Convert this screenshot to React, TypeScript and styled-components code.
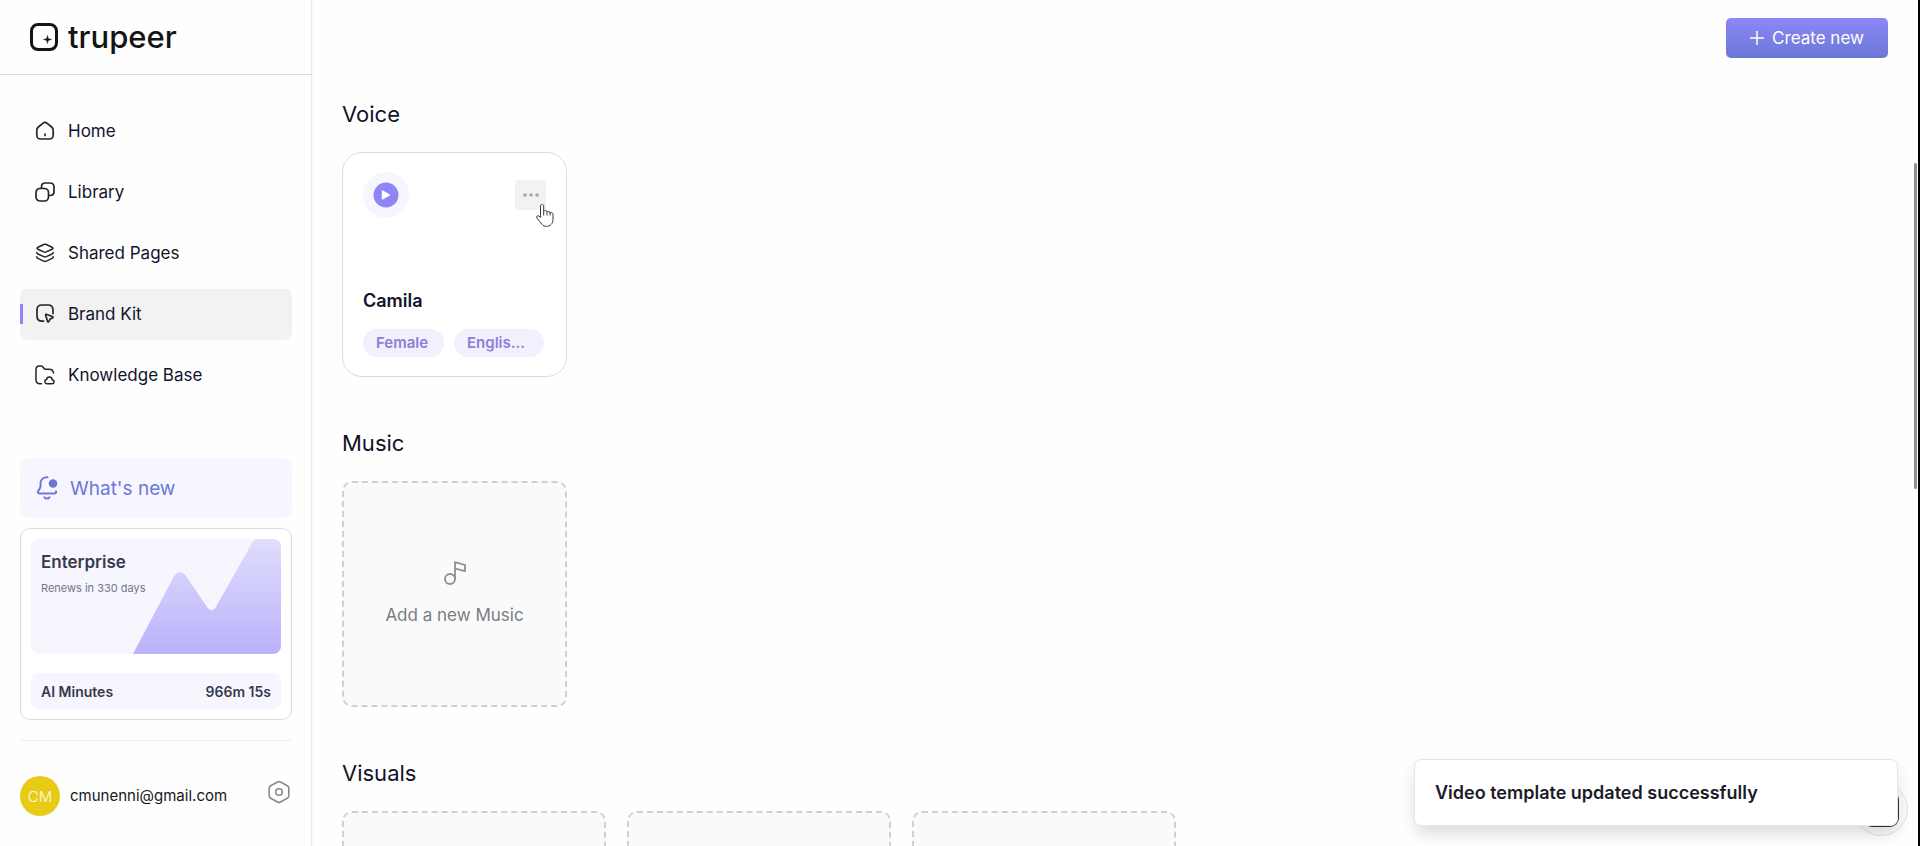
import React from "react";
import styled, { createGlobalStyle, css } from "styled-components";

const GlobalStyle = createGlobalStyle`
  *, *::before, *::after { box-sizing: border-box; }
  html, body { margin: 0; padding: 0; }
  body {
    font-family: Inter, "Liberation Sans", sans-serif;
    color: #10132a;
    background: #fefefe;
    overflow: hidden;
  }
  button { font: inherit; color: inherit; border: 0; background: none; padding: 0; cursor: pointer; }
  h2, h3, p, ul { margin: 0; padding: 0; }
  svg { display: block; flex-shrink: 0; }
`;

const Shell = styled.div`
  position: relative;
  display: flex;
  height: 100vh;
  overflow: hidden;
  border-right: 2px solid #000;
`;

const Sidebar = styled.aside`
  display: flex;
  flex-direction: column;
  flex: 0 0 312px;
  border-right: 1px solid #e9e9ec;
  box-shadow: 1px 0 2px rgba(0, 0, 0, 0.03);
`;

const Brand = styled.a`
  display: flex;
  align-items: center;
  gap: 10px;
  height: 75px;
  flex-shrink: 0;
  padding: 0 0 0 30px;
  border-bottom: 1px solid #d9d9dc;
  color: #141414;
  font-size: 31px;
  font-weight: 500;
  line-height: 40px;
  text-decoration: none;
`;

const Nav = styled.nav`
  padding: 31px 19px 0 20px;
`;

const NavList = styled.ul`
  display: flex;
  flex-direction: column;
  gap: 10px;
  list-style: none;
`;

const NavLink = styled.a<{ $active?: boolean }>`
  display: flex;
  align-items: center;
  gap: 13px;
  height: 51px;
  padding: 0 0 2px 15px;
  border-radius: 6px;
  font-size: 17px;
  line-height: 24px;
  color: #12142a;
  text-decoration: none;
  ${(p) =>
    p.$active &&
    css`
      position: relative;
      background: #f2f2f3;
      &::before {
        content: "";
        position: absolute;
        left: 0;
        top: 15px;
        width: 3px;
        height: 20px;
        background: #8f86f8;
      }
    `}
`;

const SidebarBottom = styled.div`
  display: flex;
  flex-direction: column;
  margin-top: auto;
  padding: 0 19px 30px 20px;
`;

const WhatsNew = styled.button`
  display: flex;
  align-items: center;
  gap: 12px;
  height: 60px;
  padding-left: 16px;
  border-radius: 10px;
  background: #f7f6ff;
  color: #6b78d6;
  font-size: 19px;
`;

const PlanCard = styled.section`
  margin-top: 10px;
  padding: 10px;
  border: 1px solid #dcdcdf;
  border-radius: 10px;
  background: #fff;
`;

const PlanBanner = styled.div`
  display: grid;
  height: 115px;
  border-radius: 8px;
  background: #f7f6ff;
  overflow: hidden;
  > * { grid-area: 1 / 1; }
  > svg { justify-self: end; align-self: end; }
`;

const PlanInfo = styled.div`
  padding: 11px 10px;
`;

const PlanName = styled.h3`
  font-size: 17px;
  line-height: 24px;
  font-weight: 600;
  color: #363a4c;
`;

const PlanRenewal = styled.p`
  margin-top: 5px;
  font-size: 11px;
  line-height: 18px;
  color: #6f7688;
`;

const Minutes = styled.div`
  display: flex;
  align-items: center;
  justify-content: space-between;
  height: 36px;
  margin-top: 19px;
  padding: 0 10px;
  border-radius: 8px;
  background: #f7f6ff;
  font-size: 14px;
  font-weight: 600;
  color: #363a4c;
`;

const Account = styled.div`
  display: flex;
  align-items: center;
  margin-top: 20px;
  padding-top: 35px;
  border-top: 1px solid #ededef;
`;

const Avatar = styled.span`
  display: grid;
  place-items: center;
  width: 40px;
  height: 40px;
  border-radius: 50%;
  background: #e8cb17;
  color: #fffbe0;
  font-size: 15px;
  font-weight: 300;
`;

const Email = styled.span`
  margin-left: 10px;
  font-size: 15px;
  line-height: 20px;
  color: #15161c;
`;

const SettingsButton = styled.button`
  align-self: flex-start;
  margin: 4px 2px 0 auto;
`;

const Main = styled.main`
  flex: 1;
  min-width: 0;
  overflow: hidden;
`;

const TopBar = styled.header`
  display: flex;
  justify-content: flex-end;
  padding: 18px 30px 0 0;
`;

const CreateButton = styled.button`
  display: flex;
  align-items: center;
  justify-content: center;
  gap: 8px;
  width: 162px;
  height: 40px;
  border-radius: 5px;
  background: linear-gradient(180deg, #8e86f8, #6b78d6);
  color: #fff;
  font-size: 17px;
`;

const Content = styled.div`
  display: flex;
  flex-direction: column;
  gap: 52px;
  padding: 42px 30px 40px;
`;

const Heading = styled.h2`
  margin-bottom: 24px;
  font-size: 22px;
  line-height: 28px;
  font-weight: 400;
`;

const Row = styled.div`
  display: flex;
  gap: 21px;
`;

const VoiceCard = styled.article`
  display: flex;
  flex-direction: column;
  width: 225px;
  height: 225px;
  padding: 19px 20px;
  border: 1px solid #dcdcdf;
  border-radius: 20px;
  background: #fff;
`;

const VoiceActions = styled.div`
  display: flex;
  align-items: center;
  justify-content: space-between;
  margin-bottom: auto;
`;

const PlayButton = styled.button`
  display: grid;
  place-items: center;
  width: 46px;
  height: 46px;
  border-radius: 50%;
  background: #f7f6ff;
`;

const MoreButton = styled.button`
  display: grid;
  place-items: center;
  width: 31px;
  height: 30px;
  border-radius: 3px;
  background: #f2f2f2;
`;

const VoiceName = styled.h3`
  font-size: 18px;
  line-height: 24px;
  font-weight: 600;
`;

const Chips = styled.div`
  display: flex;
  gap: 10px;
  margin-top: 16px;
`;

const Chip = styled.span<{ $width: number }>`
  width: ${(p) => p.$width}px;
  height: 28px;
  padding: 0 13px;
  border-radius: 14px;
  background: #f3effc;
  color: #8b7fd6;
  font-size: 15px;
  line-height: 28px;
  font-weight: 600;
  white-space: nowrap;
`;

const AddTile = styled.button<{ $width: number }>`
  display: flex;
  flex-direction: column;
  align-items: center;
  justify-content: center;
  gap: 18px;
  width: ${(p) => p.$width}px;
  height: 226px;
  border: 2px dashed #d0d0d2;
  border-radius: 10px;
  background: #fafafa;
  color: #7b7d84;
  font-size: 17px;
  line-height: 24px;
`;

const ScrollThumb = styled.div`
  position: absolute;
  top: 163px;
  right: 1px;
  width: 3px;
  height: 326px;
  border-radius: 2px;
  background: #8e8e8e;
`;

const ChatBubble = styled.button`
  position: absolute;
  right: 10px;
  bottom: 10px;
  display: grid;
  place-items: center;
  width: 54px;
  height: 54px;
  border: 1px solid #e4e4e4;
  border-radius: 50%;
  background: #fafafa;
  &::before {
    content: "";
    width: 36px;
    height: 36px;
    border: 2px solid #333;
    border-radius: 9px;
  }
`;

const Toast = styled.div`
  position: absolute;
  right: 20px;
  bottom: 20px;
  display: flex;
  align-items: center;
  width: 484px;
  height: 67px;
  padding: 0 20px;
  border: 1px solid #e6e6e8;
  border-radius: 7px;
  background: #fff;
  box-shadow: 0 10px 16px -3px rgba(0, 0, 0, 0.12), 0 4px 24px rgba(0, 0, 0, 0.04);
  font-size: 18px;
  font-weight: 600;
  color: #1b1b28;
`;

const Pointer = styled.svg`
  position: absolute;
  left: 535px;
  top: 203px;
`;

const line = {
  width: 20,
  height: 20,
  viewBox: "0 0 20 20",
  fill: "none",
  stroke: "#252525",
  strokeWidth: 1.7,
  strokeLinecap: "round" as const,
  strokeLinejoin: "round" as const,
  "aria-hidden": true,
};

const LogoMark = () => (
  <svg width="28" height="28" viewBox="0 0 28 28" aria-hidden="true">
    <rect x="1.5" y="1.5" width="25" height="25" rx="6.5" fill="none" stroke="#141414" strokeWidth="3" />
    <path d="M17.5 12.5c.5 3 1 3.500 4 4c-3 .5-3.500 1-4 4c-.5-3-1-3.500-4-4c3-.5 3.500-1 4-4z" fill="#141414" stroke="#141414" strokeWidth=".5" />
  </svg>
);

const HomeIcon = () => (
  <svg {...line}>
    <path d="M1.800 9.200c0-1.500.3-2.200 1.500-3.200L7.800 2.400c1.400-1.200 3-1.200 4.400 0l4.500 3.600c1.200 1 1.500 1.700 1.500 3.200v4.600c0 3.200-1 4.200-4.200 4.200H6c-3.200 0-4.200-1-4.200-4.200z" />
    <path d="M10 13v1.500" />
  </svg>
);

const LibraryIcon = () => (
  <svg {...line}>
    <rect x="1" y="6.500" width="12.500" height="12.500" rx="4" />
    <path d="M6.500 6.200V5c0-2.800 1.200-4 4-4H15c2.800 0 4 1.200 4 4v4.500c0 2.800-1.200 4-4 4h-1.200" />
  </svg>
);

const LayersIcon = () => (
  <svg {...line} strokeWidth={1.5}>
    <path d="M8.700 1.500L3 4.200c-1.300.6-1.300 1.400 0 2l5.700 2.700c.9.400 1.700.4 2.600 0L17 6.200c1.300-.6 1.300-1.400 0-2l-5.700-2.700c-.9-.4-1.700-.4-2.600 0z" />
    <path d="M1.800 9.500c0 .7.400 1.200 1.100 1.500l5.800 2.600c.9.400 1.700.4 2.600 0l5.800-2.600c.7-.3 1.100-.8 1.100-1.500" />
    <path d="M1.800 13.800c0 .7.400 1.300 1.100 1.600l5.800 2.700c.9.400 1.700.4 2.600 0l5.800-2.700c.7-.3 1.100-.9 1.100-1.600" />
  </svg>
);

const BrandKitIcon = () => (
  <svg {...line}>
    <path d="M8.500 17.200H7.200C3.500 17.200 2 15.700 2 12V6c0-3.500 1.500-5 5-5h6c3.500 0 5 1.500 5 5v3.500" />
    <path d="M11.200 10.300l6.200 2.200c.8.300.8 1.100 0 1.500l-2 .9c-.3.200-.5.400-.6.700l-.9 1.800c-.4.800-1.200.7-1.400-.1l-1.800-6c-.2-.7.100-1.200.5-1z" />
  </svg>
);

const KnowledgeIcon = () => (
  <svg {...line} strokeWidth={1.5}>
    <path d="M6.500 18.800H5c-3 0-4-1-4-4V4.500c0-2.500 1-3.500 3.500-3.500h1.300c1.200 0 1.600.3 2.300 1.200l1 1.300c.4.500.7.700 1.500.7h3.400c3 0 4.200 1 4.500 3.800" />
    <path d="M12 18.800h5c2.700-.2 2.700-3.700.3-3.900c-.3-3.500-5.300-3.900-5.700-.3c-2.600.2-2.200 4 .4 4.200z" />
  </svg>
);

const BellIcon = () => (
  <svg width="22" height="24" viewBox="0 0 22 24" fill="none" stroke="#6b78d6" strokeWidth="2" strokeLinecap="round" strokeLinejoin="round" aria-hidden="true">
    <path d="M11.500 1.300C7.500 1 4.800 3.600 4.500 7v3c0 1-.2 1.700-.7 2.500l-1.600 2.600c-.9 1.500-.3 2.400 1.300 2.400h15c1.300 0 2-.8 1.500-2" />
    <path d="M8.500 21.300c1.200 1.500 3.800 1.500 5 0" />
    <circle cx="17" cy="7.500" r="4.300" fill="#6b78d6" stroke="none" />
  </svg>
);

const PlanWave = () => (
  <svg width="148" height="115" viewBox="0 0 148 115" aria-hidden="true">
    <defs>
      <linearGradient id="planWave" x1="0" y1="0" x2="0" y2="1">
        <stop offset="0" stopColor="#e0ddfe" />
        <stop offset="1" stopColor="#bab2fa" />
      </linearGradient>
    </defs>
    <path d="M0 115L40 39C43.500 32 49 31.500 53 37L72 65C77 73 80 73.500 84 66L119 4C121 1 122 0 126 0H148V115Z" fill="url(#planWave)" />
  </svg>
);

const GearIcon = () => (
  <svg width="22" height="24" viewBox="0 0 22 24" fill="none" stroke="#8a8a8a" strokeWidth="1.600" aria-hidden="true">
    <path d="M9.500 2Q11 1.200 12.500 2L19.300 5.800Q20.800 6.600 20.800 8.200V15.800Q20.800 17.400 19.300 18.200L12.500 22Q11 22.800 9.500 22L2.700 18.200Q1.200 17.400 1.200 15.800V8.200Q1.200 6.600 2.700 5.800Z" />
    <circle cx="11" cy="12" r="3.300" />
  </svg>
);

const PlusIcon = () => (
  <svg width="14" height="14" viewBox="0 0 14 14" stroke="#fff" strokeWidth="1.500" aria-hidden="true">
    <path d="M7 0v14M0 7h14" />
  </svg>
);

const PlayIcon = () => (
  <svg width="26" height="26" viewBox="0 0 26 26" aria-hidden="true">
    <circle cx="13" cy="13" r="12.500" fill="#8e86f8" />
    <path d="M9.500 9v8l7-4z" fill="#fff" stroke="#fff" strokeWidth="1.400" strokeLinejoin="round" />
  </svg>
);

const DotsIcon = () => (
  <svg width="16" height="4" viewBox="0 0 16 4" fill="#a6a6a6" aria-hidden="true">
    <circle cx="2" cy="2" r="1.800" />
    <circle cx="8" cy="2" r="1.800" />
    <circle cx="14" cy="2" r="1.800" />
  </svg>
);

const MusicIcon = () => (
  <svg width="22" height="24" viewBox="0 0 22 24" fill="none" stroke="#8e8e8e" strokeWidth="1.800" strokeLinejoin="round" aria-hidden="true">
    <circle cx="6" cy="18" r="5" />
    <path d="M11 18V1.200L21 4v6.200L11 7.500" />
  </svg>
);

const HandPointer = () => (
  <Pointer width="20" height="25" viewBox="0 0 20 25" fill="#fff" stroke="#3c3c3c" strokeWidth="1" strokeLinejoin="round" aria-hidden="true">
    <path d="M5.500 13V3C5.500.9 8.700.9 8.700 3V8.500C9.300 7 12 7.200 12 9C12.800 7.800 15 8.300 15 10C16 9 18 9.500 18 11.500V16C18 18.500 17.500 20 16 21.500C14 24 9 24 7 21.300C5.500 19.500 3.800 17.500 2 15.200C.8 13.500 2.600 12 4 13L5.500 14.500V11" />
    <path d="M8.700 8V12.500M12 9V12.500M15 10V12.500" />
  </Pointer>
);

const navItems = [
  { label: "Home", Icon: HomeIcon },
  { label: "Library", Icon: LibraryIcon },
  { label: "Shared Pages", Icon: LayersIcon },
  { label: "Brand Kit", Icon: BrandKitIcon, active: true },
  { label: "Knowledge Base", Icon: KnowledgeIcon },
];

const visuals = ["Add an intro", "Add an outro", "Add a background"];

export default function App() {
  return (
    <>
      <GlobalStyle />
      <Shell>
        <Sidebar>
          <Brand href="#">
            <LogoMark />
            trupeer
          </Brand>
          <Nav aria-label="Main">
            <NavList>
              {navItems.map(({ label, Icon, active }) => (
                <li key={label}>
                  <NavLink href="#" $active={active} aria-current={active ? "page" : undefined}>
                    <Icon />
                    {label}
                  </NavLink>
                </li>
              ))}
            </NavList>
          </Nav>
          <SidebarBottom>
            <WhatsNew type="button">
              <BellIcon />
              What's new
            </WhatsNew>
            <PlanCard>
              <PlanBanner>
                <PlanWave />
                <PlanInfo>
                  <PlanName>Enterprise</PlanName>
                  <PlanRenewal>Renews in 330 days</PlanRenewal>
                </PlanInfo>
              </PlanBanner>
              <Minutes>
                <span>AI Minutes</span>
                <span>966m 15s</span>
              </Minutes>
            </PlanCard>
            <Account>
              <Avatar>CM</Avatar>
              <Email>cmunenni@gmail.com</Email>
              <SettingsButton type="button" aria-label="Settings">
                <GearIcon />
              </SettingsButton>
            </Account>
          </SidebarBottom>
        </Sidebar>
        <Main>
          <TopBar>
            <CreateButton type="button">
              <PlusIcon />
              Create new
            </CreateButton>
          </TopBar>
          <Content>
            <section>
              <Heading>Voice</Heading>
              <VoiceCard>
                <VoiceActions>
                  <PlayButton type="button" aria-label="Play voice">
                    <PlayIcon />
                  </PlayButton>
                  <MoreButton type="button" aria-label="More options">
                    <DotsIcon />
                  </MoreButton>
                </VoiceActions>
                <VoiceName>Camila</VoiceName>
                <Chips>
                  <Chip $width={81}>Female</Chip>
                  <Chip $width={90}>Englis...</Chip>
                </Chips>
              </VoiceCard>
            </section>
            <section>
              <Heading>Music</Heading>
              <AddTile type="button" $width={225}>
                <MusicIcon />
                Add a new Music
              </AddTile>
            </section>
            <section>
              <Heading>Visuals</Heading>
              <Row>
                {visuals.map((label) => (
                  <AddTile key={label} type="button" $width={264} aria-label={label} />
                ))}
              </Row>
            </section>
          </Content>
        </Main>
        <ScrollThumb />
        <ChatBubble type="button" aria-label="Open chat" />
        <Toast role="status">Video template updated successfully</Toast>
        <HandPointer />
      </Shell>
    </>
  );
}
